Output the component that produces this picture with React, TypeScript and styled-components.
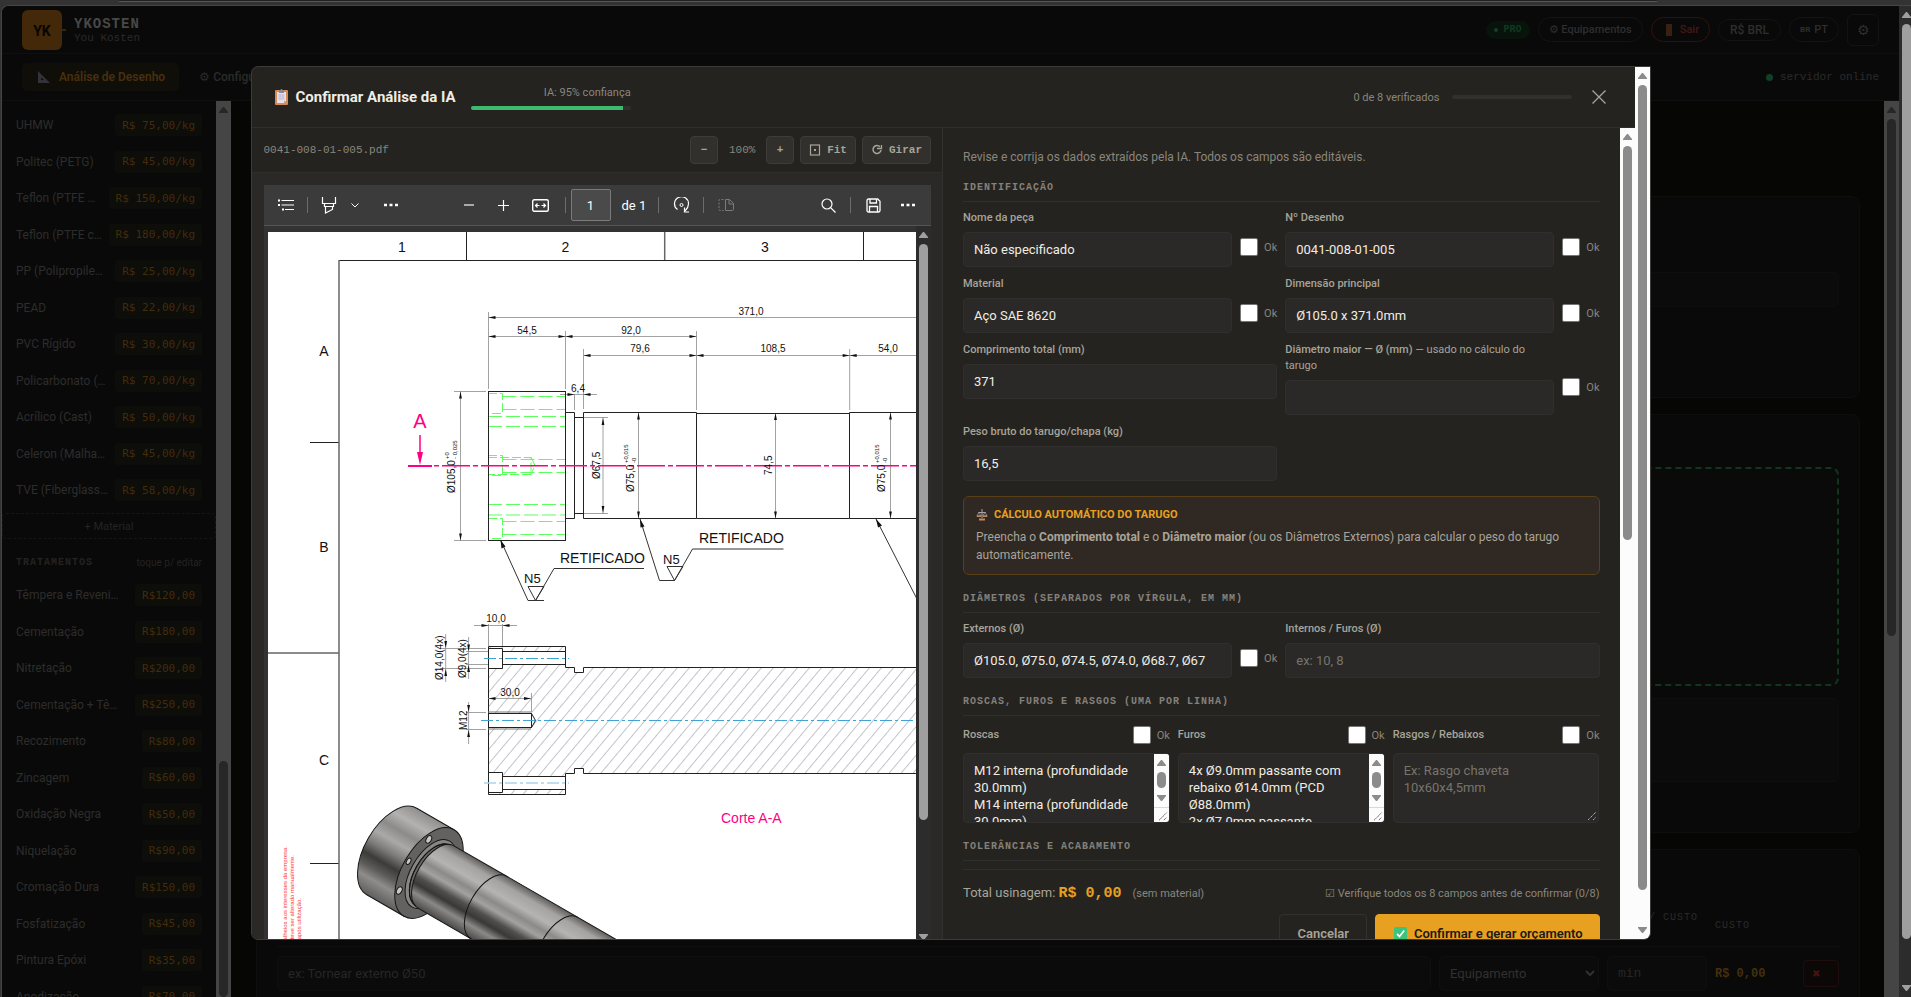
import React from 'react';
import styled, { createGlobalStyle, css } from 'styled-components';

const SANS = `Roboto, 'Liberation Sans', sans-serif`;
const MONO = `'Liberation Mono', 'DejaVu Sans Mono', monospace`;

const GlobalStyle = createGlobalStyle`
  *, *::before, *::after { box-sizing: border-box; }
  html, body { margin: 0; padding: 0; background: #060604; }
  body { font-family: ${SANS}; font-size: 13px; color: #a8a498; overflow: hidden; }
  button, input, select, textarea { font-family: inherit; margin: 0; }
`;

/* ---------- window shell ---------- */

const Shell = styled.div`
  height: 100vh;
  display: flex;
  flex-direction: column;
  background: #333333;
`;

const ChromeStrip = styled.div`
  flex: none;
  height: 5px;
  padding: 0 253px 0 118px;
`;

const ChromeTab = styled.div`
  height: 2px;
  background: #202020;
  border-bottom: 1px solid #585858;
  border-radius: 0 0 6px 6px;
`;

const WindowRow = styled.div`
  flex: 1;
  min-height: 0;
  display: flex;
  border: 1px solid #454545;
  border-right: 0;
  border-bottom: 0;
  border-radius: 8px 0 0 0;
  margin-left: 1px;
  overflow: hidden;
`;

const Page = styled.div`
  position: relative;
  flex: 1;
  min-width: 0;
  display: flex;
  flex-direction: column;
  background: #060604;
  overflow: hidden;
`;

/* ---------- scroll bars ---------- */

type Tone = 'light' | 'dim' | 'dark' | 'window';
const tones: Record<Tone, { track: string; thumb: string }> = {
  light: { track: '#fcfcfc', thumb: '#8b8b8b' },
  dim: { track: '#454545', thumb: '#272727' },
  dark: { track: '#2c2c2c', thumb: '#9f9f9f' },
  window: { track: '#2c2c2c', thumb: '#9f9f9f' },
};

const Track = styled.div<{ $tone: Tone; $narrow?: boolean }>`
  flex: none;
  width: ${p => (p.$narrow ? 12 : 15)}px;
  display: flex;
  flex-direction: column;
  padding-left: 3px;
  overflow: hidden;
  background: ${p => tones[p.$tone].track};
  color: ${p => tones[p.$tone].thumb};
`;

const ArrowSlot = styled.svg`
  flex: none;
  width: 9px;
  height: 18px;
  fill: currentColor;
`;

const Part = styled.div<{ $grow: number; $solid?: boolean }>`
  flex: ${p => p.$grow} 1 0;
  width: 9px;
  border-radius: 5px;
  background: ${p => (p.$solid ? 'currentColor' : 'transparent')};
`;

function ScrollBar({ tone, before = 0, thumb, after, narrow, openEnd }: {
  tone: Tone; before?: number; thumb: number; after: number; narrow?: boolean; openEnd?: boolean;
}) {
  return (
    <Track $tone={tone} $narrow={narrow} aria-hidden="true">
      <ArrowSlot viewBox="0 0 9 18"><path d="M4 6h1l4 5v1H0v-1z" /></ArrowSlot>
      <Part $grow={before} />
      <Part $grow={thumb} $solid />
      <Part $grow={after} />
      {!openEnd && <ArrowSlot viewBox="0 0 9 18"><path d="M4 12h1l4-5v-1H0v1z" /></ArrowSlot>}
    </Track>
  );
}

/* ---------- dimmed page behind the dialog ---------- */

const TopBar = styled.header`
  flex: none;
  height: 48px;
  display: flex;
  align-items: center;
  padding: 0 20px 0 20px;
  background: #090909;
  border-bottom: 1px solid #0f0f0f;
`;

const Logo = styled.div`
  width: 40px;
  height: 40px;
  border-radius: 6px;
  background: #43290a;
  color: #060604;
  display: flex;
  align-items: center;
  justify-content: center;
  padding-top: 3px;
  font-size: 14px;
  font-weight: 700;
`;

const LogoTick = styled.span`
  width: 4px;
  height: 2px;
  margin-right: 8px;
  background: #3a250c;
`;

const Brand = styled.div`
  flex: 1;
  font-family: ${MONO};
`;

const BrandName = styled.div`
  font-size: 14px;
  line-height: 16px;
  font-weight: 700;
  letter-spacing: 1px;
  color: #484846;
`;

const BrandSub = styled.div`
  font-size: 11px;
  line-height: 12px;
  color: #2a2a29;
`;

const TopActions = styled.div`
  display: flex;
  align-items: center;
  gap: 8px;
`;

const ProBadge = styled.span`
  display: flex;
  align-items: center;
  gap: 6px;
  height: 18px;
  padding: 0 8px;
  border-radius: 9px;
  background: #08130c;
  color: #103a22;
  font-family: ${MONO};
  font-size: 10px;
  font-weight: 700;
`;

const Dot = styled.i<{ $size: number }>`
  width: ${p => p.$size}px;
  height: ${p => p.$size}px;
  border-radius: 50%;
  background: #123f26;
`;

const Pill = styled.button<{ $danger?: boolean; $short?: boolean }>`
  display: flex;
  align-items: center;
  gap: 4px;
  height: ${p => (p.$short ? 22 : 25)}px;
  padding: 0 ${p => (p.$short ? 11 : 10)}px;
  border-radius: 13px;
  border: 1px solid ${p => (p.$danger ? '#33110f' : '#131312')};
  background: transparent;
  color: ${p => (p.$danger ? '#491612' : '#2e2e2d')};
  font-size: ${p => (p.$short ? 12 : 11)}px;
  font-weight: 500;
`;

const FlagCode = styled.span`
  font-size: 8px;
  font-weight: 700;
`;

const GearButton = styled.button`
  width: 32px;
  height: 32px;
  border-radius: 6px;
  border: 1px solid #131312;
  background: transparent;
  color: #2e2e2d;
  font-size: 14px;
  line-height: 16px;
  padding: 0;
`;

const NavBar = styled.nav`
  flex: none;
  height: 47px;
  display: flex;
  align-items: center;
  gap: 4px;
  padding: 0 20px;
  background: #090909;
  border-bottom: 1px solid #0f0f0f;
`;

const NavTab = styled.button<{ $active?: boolean }>`
  display: flex;
  align-items: center;
  gap: 9px;
  height: 28px;
  padding: 0 14px 0 16px;
  border: 0;
  border-radius: 5px;
  font-size: 12px;
  font-weight: ${p => (p.$active ? 600 : 500)};
  color: ${p => (p.$active ? '#48300e' : '#2b2b2a')};
  background: ${p => (p.$active ? '#100e08' : 'transparent')};
`;

const ServerStatus = styled.div`
  margin-left: auto;
  display: flex;
  align-items: center;
  gap: 7px;
  font-family: ${MONO};
  font-size: 11px;
  color: #2b2b2a;
`;

const Columns = styled.div`
  flex: 1;
  min-height: 0;
  display: flex;
`;

const Sidebar = styled.aside`
  flex: none;
  width: 214px;
  background: #090909;
  overflow: hidden;
  padding-top: 6px;
`;

const PriceRow = styled.label`
  display: flex;
  align-items: center;
  justify-content: space-between;
  height: 36px;
  padding: 0 14px;
  font-size: 12px;
  color: #2d2d2b;
  white-space: nowrap;
  &:nth-child(even) { height: 37px; }
`;

const PriceInput = styled.input<{ $chars: number }>`
  width: calc(${p => p.$chars}ch + 14px);
  height: 22px;
  padding: 0 7px;
  border: 0;
  border-radius: 3px;
  background: #0d0d0a;
  color: #432c0b;
  font-family: 'DejaVu Sans Mono', ${MONO};
  font-size: 11px;
`;

const PriceList = styled.div``;

const AddMaterial = styled.button`
  display: block;
  width: 100%;
  height: 26px;
  margin: 5px 0 10px;
  border: 1px dashed #161615;
  border-radius: 4px;
  background: transparent;
  color: #242423;
  font-size: 11px;
`;

const ListHead = styled.div`
  display: flex;
  align-items: center;
  justify-content: space-between;
  height: 26px;
  padding: 0 14px;
  margin-bottom: 2px;
  color: #232322;
  font-size: 10px;
`;

const ListTitle = styled.span`
  font-family: ${MONO};
  font-size: 10px;
  font-weight: 700;
  letter-spacing: 1px;
`;

const Main = styled.main`
  flex: 1;
  min-width: 0;
  padding: 95px 24px 0 25px;
  display: flex;
  flex-direction: column;
  gap: 16px;
  overflow: hidden;
`;

const Card = styled.section`
  flex: none;
  border: 1px solid #0e0e0d;
  border-radius: 8px;
  background: #090909;
  padding: 54px 20px 50px;
`;

const ImportCard = styled(Card)`
  padding-top: 52px;
`;

const CardField = styled.div<{ $tall?: boolean }>`
  margin-top: ${p => (p.$tall ? 12 : 21)}px;
  height: ${p => (p.$tall ? 84 : 35)}px;
  margin-bottom: ${p => (p.$tall ? 0 : 40)}px;
  border: 1px solid #0e0e0d;
  border-radius: 5px;
  background: #0b0b0b;
`;

const DropZone = styled.div`
  height: 219px;
  border: 2px dashed #12351f;
  border-radius: 8px;
  background: #0a0a0a;
`;

const costGrid = css`
  display: grid;
  grid-template-columns: 1fr 160px 100px 80px 36px;
  gap: 8px;
  align-items: center;
`;

const CostCard = styled(Card)`
  padding-top: 60px;
`;

const CostHead = styled.div`
  ${costGrid}
  height: 37px;
  border-bottom: 1px solid #0f0f0e;
  padding-bottom: 4px;
  font-family: ${MONO};
  font-size: 10px;
  line-height: 16px;
  letter-spacing: 1px;
  color: #2b2b29;
  white-space: nowrap;
`;

const CostRow = styled.div`
  ${costGrid}
  padding-top: 9px;
`;

const dimBox = css`
  width: 100%;
  height: 35px;
  border: 1px solid #0f0f0e;
  border-radius: 5px;
  background: #0b0b0b;
  color: #31312f;
  font-size: 13px;
  padding: 0 10px;
  &::placeholder { color: #262625; opacity: 1; }
`;

const DimInput = styled.input<{ $mono?: boolean }>`
  ${dimBox}
  ${p => p.$mono && css`font-family: ${MONO};`}
`;

const DimSelect = styled.select`
  ${dimBox}
  padding: 0 6px;
`;

const CostValue = styled.output`
  font-family: ${MONO};
  font-size: 12px;
  font-weight: 700;
  color: #43300f;
`;

const RemoveButton = styled.button`
  height: 27px;
  border: 1px solid #1f0d0c;
  border-radius: 4px;
  background: #0d0808;
  color: #42150f;
  font-size: 10px;
  padding: 0 10px 0 0;
`;

/* ---------- dialog ---------- */

const Overlay = styled.div`
  position: absolute;
  inset: 0;
  display: flex;
  justify-content: center;
  padding: 60px 20px 57px;
`;

const Dialog = styled.div`
  width: 100%;
  max-width: 1400px;
  height: 100%;
  display: flex;
  align-items: stretch;
  overflow: hidden;
  border: 1px solid #3b3b39;
  border-radius: 7px 0 7px 7px;
  background: #242320;
`;

const DialogContent = styled.div`
  flex: 1;
  min-width: 0;
  display: flex;
  flex-direction: column;
`;

const DialogHeader = styled.header`
  flex: none;
  height: 61px;
  display: flex;
  align-items: center;
  padding: 0 26px 0 23px;
  border-bottom: 1px solid #2f2e2c;
`;

const DialogTitle = styled.h2`
  margin: 0 15px 0 0;
  display: flex;
  align-items: center;
  gap: 8px;
  font-size: 15px;
  line-height: 20px;
  font-weight: 700;
  color: #f0ede4;
`;

const Confidence = styled.div`
  width: 160px;
  margin-right: auto;
  text-align: right;
  font-size: 11px;
  line-height: 16px;
  color: #8a867c;
`;

const Meter = styled.div<{ $fill: number; $wide?: boolean }>`
  height: 4px;
  width: ${p => (p.$wide ? '100%' : '120px')};
  margin-top: ${p => (p.$wide ? 5 : 0)}px;
  border-radius: 2px;
  overflow: hidden;
  background: #31302e;
  &::before {
    content: '';
    display: block;
    height: 100%;
    width: ${p => p.$fill}%;
    background: #3dba6f;
  }
`;

const Verified = styled.div`
  display: flex;
  align-items: center;
  gap: 12px;
  font-size: 11px;
  color: #8a867c;
`;

const CloseButton = styled.button`
  margin-left: 17px;
  width: 20px;
  height: 20px;
  padding: 0;
  border: 0;
  background: transparent;
  color: #a8a498;
`;

const DialogBody = styled.div`
  flex: none;
  display: grid;
  grid-template-columns: minmax(0, 1fr) minmax(0, 1fr);
`;

/* ---------- document pane ---------- */

const DocPane = styled.div`
  display: flex;
  flex-direction: column;
  border-right: 1px solid #32312f;
  background: #2a2927;
`;

const DocBar = styled.div`
  flex: none;
  height: 45px;
  display: flex;
  align-items: center;
  gap: 6px;
  padding: 0 11px 0 12px;
  background: #242320;
  border-bottom: 1px solid #2f2e2c;
  font-family: ${MONO};
  font-size: 11px;
  color: #8a867c;
`;

const FileName = styled.span`
  margin-right: auto;
`;

const Zoom = styled.span`
  width: 36px;
  text-align: center;
`;

const ToolButton = styled.button`
  height: 28px;
  min-width: 28px;
  display: flex;
  align-items: center;
  justify-content: center;
  gap: 6px;
  padding: 0 8px;
  border: 1px solid #3d3c39;
  border-radius: 4px;
  background: #31302d;
  color: #a8a498;
  font-family: ${MONO};
  font-size: 11px;
  font-weight: 700;
`;

const Viewer = styled.div`
  flex: 1;
  display: flex;
  flex-direction: column;
  margin: 12px 11px 27px 12px;
  background: #333333;
`;

const ViewerBar = styled.div`
  flex: none;
  height: 41px;
  display: flex;
  align-items: center;
  padding: 0 6px 0 8px;
  background: #3b3b3b;
  border-bottom: 1px solid #555555;
  color: #ffffff;
  font-size: 13px;
`;

const ViewerGroup = styled.div<{ $place?: 'middle' | 'end' }>`
  display: flex;
  align-items: center;
  ${p => p.$place === 'middle' && css`margin-left: 37px;`}
  ${p => p.$place === 'end' && css`margin-left: auto;`}
`;

const IconButton = styled.button<{ $w?: number; $dim?: boolean }>`
  width: ${p => p.$w ?? 36}px;
  height: 32px;
  padding: 0;
  display: flex;
  align-items: center;
  justify-content: center;
  border: 0;
  background: transparent;
  color: ${p => (p.$dim ? '#7b7b7b' : '#ffffff')};
`;

const Glyph = styled.svg`
  display: block;
  fill: none;
  stroke: currentColor;
`;

const Divider = styled.i<{ $gap?: number }>`
  width: 1px;
  height: 16px;
  margin: 0 ${p => p.$gap ?? 4}px;
  background: #6c6c6c;
`;

const PageInput = styled.input`
  width: 40px;
  height: 32px;
  border: 1px solid #7a7a7a;
  border-radius: 2px;
  background: #4a4a4a;
  color: #ffffff;
  font-size: 13px;
  text-align: center;
  padding: 0;
`;

const PageCount = styled.span`
  margin: 0 8px 0 11px;
`;

const ViewerStage = styled.div`
  flex: 1;
  min-height: 0;
  display: flex;
`;

const Sheet = styled.div`
  flex: 1;
  min-width: 0;
  margin: 6px 0 0 4px;
  background: #ffffff;
  overflow: hidden;
`;

const Drawing = styled.svg`
  display: block;
  width: 648px;
  height: 708px;
`;

/* ---------- form pane ---------- */

const FormPane = styled.div`
  display: flex;
`;

const Form = styled.form`
  flex: 1;
  min-width: 0;
  padding: 20px;
`;

const Intro = styled.p`
  margin: 0 0 14px;
  font-size: 12px;
  line-height: 18px;
  color: #8a867c;
`;

const SectionTitle = styled.h3<{ $first?: boolean }>`
  margin: ${p => (p.$first ? 0 : 16)}px 0 8px;
  padding-bottom: 5px;
  border-bottom: 1px solid #302f2d;
  font-family: ${MONO};
  font-size: 10px;
  line-height: 16px;
  font-weight: 700;
  letter-spacing: 1px;
  text-transform: uppercase;
  color: #85817a;
`;

const FieldGrid = styled.div<{ $cols: number }>`
  display: grid;
  grid-template-columns: repeat(${p => p.$cols}, minmax(0, 1fr));
  gap: 9px 8px;
`;

const FieldRow = styled.div`
  display: flex;
  align-items: center;
  align-self: start;
  gap: 8px;
`;

const FieldStack = styled.div`
  flex: 1;
  min-width: 0;
`;

const FieldLabel = styled.label`
  display: block;
  margin-bottom: 6px;
  font-size: 11px;
  line-height: 16px;
  font-weight: 500;
  color: #a8a498;
`;

const LabelNote = styled.span`
  font-weight: 400;
`;

const controlBox = css`
  display: block;
  width: 100%;
  border: 1px solid #302f2d;
  border-radius: 4px;
  background: #2a2927;
  color: #f0ede4;
  font-size: 13px;
  &::placeholder { color: #77746c; opacity: 1; }
`;

const TextInput = styled.input`
  ${controlBox}
  height: 35px;
  padding: 0 10px;
`;

const OkLabel = styled.label<{ $beside?: boolean }>`
  flex: none;
  display: flex;
  align-items: center;
  gap: 6px;
  padding-top: ${p => (p.$beside ? 17 : 0)}px;
  font-size: 11px;
  color: #8a867c;
`;

const Tick = styled.input`
  appearance: none;
  width: 18px;
  height: 18px;
  border: 1px solid #767676;
  border-radius: 2px;
  background: #ffffff;
`;

const Callout = styled.aside`
  margin-top: 15px;
  padding: 10px 12px;
  border: 1px solid #5a4019;
  border-radius: 6px;
  background: #302822;
  font-size: 12px;
  line-height: 18px;
  color: #a8a498;
`;

const CalloutTitle = styled.div`
  display: flex;
  align-items: center;
  gap: 6px;
  margin-bottom: 5px;
  font-size: 11px;
  line-height: 16px;
  font-weight: 700;
  text-transform: uppercase;
  color: #e8a020;
`;

const NoteHead = styled.div`
  display: flex;
  align-items: center;
  justify-content: space-between;
  height: 22px;
  margin-bottom: 7px;
  > label:first-child { margin: 0; }
`;

const NoteBox = styled.div`
  ${controlBox}
  display: flex;
  height: 70px;
  overflow: hidden;
`;

const NoteArea = styled.textarea`
  flex: 1;
  min-width: 0;
  border: 0;
  resize: none;
  overflow: hidden;
  background: transparent;
  color: inherit;
  font-size: 13px;
  line-height: 17px;
  padding: 8px 10px 0;
  &::placeholder { color: #77746c; opacity: 1; }
`;

const NoteSide = styled.div<{ $scroll?: boolean }>`
  flex: none;
  width: 15px;
  display: flex;
  flex-direction: column;
  justify-content: flex-end;
  background: ${p => (p.$scroll ? '#fcfcfc' : 'transparent')};
  color: ${p => (p.$scroll ? '#444444' : '#b0b0b0')};
  > div { flex: 1; }
`;

const Grip = styled.svg<{ $line?: boolean }>`
  display: block;
  width: 15px;
  height: 15px;
  fill: none;
  stroke: currentColor;
  ${p => p.$line && css`border-top: 1px solid #d9d9d9;`}
`;

const FormFooter = styled.footer`
  border-top: 1px solid #302f2d;
  padding-top: 13px;
`;

const TotalRow = styled.div`
  display: flex;
  align-items: center;
  justify-content: space-between;
  height: 20px;
  margin-bottom: 11px;
  font-size: 13px;
`;

const TotalValue = styled.strong`
  font-family: ${MONO};
  font-size: 15px;
  color: #e8a020;
  white-space: pre;
`;

const Hint = styled.span<{ $apart?: boolean }>`
  margin-left: ${p => (p.$apart ? 11 : 0)}px;
  font-size: 11px;
  color: #8a867c;
`;

const ActionRow = styled.div`
  display: flex;
  justify-content: flex-end;
  gap: 8px;
`;

const ActionButton = styled.button<{ $primary?: boolean }>`
  height: 39px;
  display: flex;
  align-items: center;
  gap: 7px;
  padding: 0 17px;
  border: 1px solid ${p => (p.$primary ? '#e8a020' : '#32312f')};
  border-radius: 4px;
  background: ${p => (p.$primary ? '#e8a020' : 'transparent')};
  color: ${p => (p.$primary ? '#1c1a16' : '#a8a498')};
  font-size: 13px;
  font-weight: 600;
  ${p => p.$primary && css`padding: 0 16px 0 18px;`}
`;

/* ---------- data ---------- */

const materials: [string, string][] = [
  ['UHMW', 'R$ 75,00/kg'],
  ['Politec (PETG)', 'R$ 45,00/kg'],
  ['Teflon (PTFE …', 'R$ 150,00/kg'],
  ['Teflon (PTFE c…', 'R$ 180,00/kg'],
  ['PP (Polipropile…', 'R$ 25,00/kg'],
  ['PEAD', 'R$ 22,00/kg'],
  ['PVC Rígido', 'R$ 30,00/kg'],
  ['Policarbonato (…', 'R$ 70,00/kg'],
  ['Acrílico (Cast)', 'R$ 50,00/kg'],
  ['Celeron (Malha…', 'R$ 45,00/kg'],
  ['TVE (Fiberglass…', 'R$ 58,00/kg'],
];

const treatments: [string, string][] = [
  ['Têmpera e Reveni…', 'R$120,00'],
  ['Cementação', 'R$180,00'],
  ['Nitretação', 'R$200,00'],
  ['Cementação + Tê…', 'R$250,00'],
  ['Recozimento', 'R$80,00'],
  ['Zincagem', 'R$60,00'],
  ['Oxidação Negra', 'R$50,00'],
  ['Niquelação', 'R$90,00'],
  ['Cromação Dura', 'R$150,00'],
  ['Fosfatização', 'R$45,00'],
  ['Pintura Epóxi', 'R$35,00'],
  ['Anodização', 'R$70,00'],
];

/* ---------- small parts ---------- */

function Prices({ items }: { items: [string, string][] }) {
  return (
    <PriceList>
      {items.map(([name, price]) => (
        <PriceRow key={name}>
          {name}
          <PriceInput $chars={price.length} defaultValue={price} />
        </PriceRow>
      ))}
    </PriceList>
  );
}

function Ok({ name, beside }: { name: string; beside?: boolean }) {
  return (
    <OkLabel $beside={beside}>
      <Tick type="checkbox" name={`ok-${name}`} />
      Ok
    </OkLabel>
  );
}

function Field({ id, label, note, value, placeholder, ok }: {
  id: string; label: string; note?: string; value?: string; placeholder?: string; ok?: boolean;
}) {
  return (
    <FieldRow>
      <FieldStack>
        <FieldLabel htmlFor={id}>
          {label}
          {note && <LabelNote> {note}</LabelNote>}
        </FieldLabel>
        <TextInput id={id} defaultValue={value} placeholder={placeholder} />
      </FieldStack>
      {ok && <Ok name={id} beside />}
    </FieldRow>
  );
}

function Note({ id, label, value, placeholder, scroll }: {
  id: string; label: string; value?: string; placeholder?: string; scroll?: boolean;
}) {
  return (
    <FieldStack>
      <NoteHead>
        <FieldLabel htmlFor={id}>{label}</FieldLabel>
        <Ok name={id} />
      </NoteHead>
      <NoteBox>
        <NoteArea id={id} defaultValue={value} placeholder={placeholder} />
        <NoteSide $scroll={scroll}>
          {scroll && <ScrollBar tone="light" thumb={17} after={1} />}
          <Grip viewBox="0 0 15 15" $line={scroll}><path d="M5 13 13 5M10 13l3-3" strokeDasharray="1.5 .6" /></Grip>
        </NoteSide>
      </NoteBox>
    </FieldStack>
  );
}

const ClipboardIcon = () => (
  <svg width="13" height="16" viewBox="0 0 13 16">
    <rect x="0" y="1" width="13" height="15" rx="1" fill="#d78a52" />
    <path d="M2 3h9v9l-2 2H2z" fill="#e6dff0" />
    <path d="M11 12H9v2z" fill="#a99bb8" />
    <path d="M3.500 6h6M3.500 8h6M3.500 10h6" stroke="#b9b0c9" strokeWidth="1" />
    <path d="M4 1h1.500a1 1 0 0 1 2 0H9v3H4z" fill="#8c8794" />
  </svg>
);

const CheckIcon = () => (
  <svg width="13" height="13" viewBox="0 0 13 13">
    <rect width="13" height="13" rx="1.500" fill="#3cc47c" />
    <path d="M3 6.800 5.500 9.500 10.200 3.500" fill="none" stroke="#fff" strokeWidth="1.700" />
  </svg>
);

const ScaleIcon = () => (
  <svg width="12" height="12" viewBox="0 0 12 12" fill="none" stroke="#c08a5c">
    <path d="M6 0v9M2.500 3.500h7" stroke="#a9a4ad" />
    <path d="M3 3 1 7h4zM9 3 7 7h4z" stroke="#a9a4ad" strokeWidth=".7" />
    <path d="M.8 7.200h4.400M6.800 7.200h4.400" strokeWidth="1.400" />
    <path d="M3 10.500h6" strokeWidth="2" />
  </svg>
);

const SetSquareIcon = () => (
  <svg width="12" height="12" viewBox="0 0 12 12"><path fillRule="evenodd" d="M0 0l12 12H0zM3 6.500V9h3z" fill="#343238" /></svg>
);

/* ---------- technical drawing ---------- */

const arrowAt = (x: number, y: number, dir: 'l' | 'r' | 'u' | 'd') => {
  const a = 7, b = 1.4;
  if (dir === 'l') return `M${x} ${y}l${a} ${-b}v${2 * b}z`;
  if (dir === 'r') return `M${x} ${y}l${-a} ${-b}v${2 * b}z`;
  if (dir === 'u') return `M${x} ${y}l${-b} ${a}h${2 * b}z`;
  return `M${x} ${y}l${-b} ${-a}h${2 * b}z`;
};

function Up({ x, y, size = 10, anchor = 'start', fill = '#111', children }: {
  x: number; y: number; size?: number; anchor?: 'start' | 'middle' | 'end'; fill?: string; children: React.ReactNode;
}) {
  return (
    <text transform={`translate(${x} ${y}) rotate(-90)`} fontSize={size} textAnchor={anchor} fill={fill}>{children}</text>
  );
}

function TechnicalDrawing() {
  return (
    <Drawing viewBox="268 232 648 708" fontFamily="'Liberation Sans', Arial, sans-serif" role="img" aria-label="0041-008-01-005">
      <defs>
        <pattern id="hatch" width="9.200" height="9.200" patternUnits="userSpaceOnUse" patternTransform="rotate(40)">
          <path d="M.5 0V9.200" stroke="#b4b5be" strokeWidth=".8" />
        </pattern>
        <linearGradient id="flange" x1="0" y1="0" x2="0" y2="1">
          <stop offset="0" stopColor="#8f8e8c" /><stop offset=".15" stopColor="#b3b2b0" />
          <stop offset=".28" stopColor="#8c8b89" /><stop offset=".4" stopColor="#aaa9a7" />
          <stop offset=".52" stopColor="#7c7b79" /><stop offset=".64" stopColor="#3b3b39" />
          <stop offset=".74" stopColor="#5c5b59" /><stop offset=".84" stopColor="#8e8d8b" />
          <stop offset="1" stopColor="#5f5e5c" />
        </linearGradient>
        <linearGradient id="shaft" x1="0" y1="-36" x2="0" y2="36" gradientUnits="userSpaceOnUse">
          <stop offset="0" stopColor="#5f5e5c" /><stop offset=".12" stopColor="#a4a3a1" />
          <stop offset=".28" stopColor="#b5b4b2" /><stop offset=".4" stopColor="#8b8a88" />
          <stop offset=".5" stopColor="#a3a2a0" /><stop offset=".62" stopColor="#504f4d" />
          <stop offset=".72" stopColor="#383836" /><stop offset=".84" stopColor="#8a8987" />
          <stop offset="1" stopColor="#4a4947" />
        </linearGradient>
      </defs>

      {/* sheet frame */}
      <g fill="none" stroke="#222">
        <path d="M339 260.500H916M466.500 232v28M863.500 232v28M310 442.500h29M310 863.500h29" />
        <path d="M664.700 232v28M268 653h71M339 260v680" stroke="#666" strokeWidth="1.500" />
      </g>
      <g fontSize="14" textAnchor="middle" fill="#111">
        <text x="402" y="252">1</text><text x="565.500" y="252">2</text><text x="765" y="252">3</text>
        <text x="324" y="356">A</text><text x="324" y="552">B</text><text x="324" y="765">C</text>
      </g>

      {/* dimension lines, front view */}
      <g fill="none" stroke="#8a8a8a" strokeWidth=".8">
        <path d="M488.500 317.500H916M488.500 312v77M488.500 336.500H696.500M565.500 331v58M696.500 331v79" />
        <path d="M583.500 355.500H916M583.500 349v60M849.700 349v61" />
        <path d="M560 394.500h37M574.500 394v16" />
        <path d="M454 391.500h32M454 540.500h32M460.500 391v150M583 417.500h25M583 513.500h25M603 417v97" />
        <path d="M638.500 412v107M775.500 413v106M890.500 412v107" />
      </g>
      <g fill="#111">
        {[
          arrowAt(488.5, 317.5, 'l'), arrowAt(488.5, 336.5, 'l'), arrowAt(565.5, 336.5, 'r'), arrowAt(565.5, 336.5, 'l'),
          arrowAt(696.5, 336.5, 'r'), arrowAt(583.5, 355.5, 'l'), arrowAt(696.5, 355.5, 'r'), arrowAt(696.5, 355.5, 'l'),
          arrowAt(849.7, 355.5, 'r'), arrowAt(849.7, 355.5, 'l'), arrowAt(574.5, 394.5, 'r'), arrowAt(583.5, 394.5, 'l'),
          arrowAt(460.5, 391.5, 'u'), arrowAt(460.5, 540.5, 'd'), arrowAt(603, 418, 'u'), arrowAt(603, 513, 'd'),
          arrowAt(638.5, 412.5, 'u'), arrowAt(638.5, 518.5, 'd'), arrowAt(775.5, 413, 'u'), arrowAt(775.5, 518.5, 'd'),
          arrowAt(890.5, 412.5, 'u'), arrowAt(890.5, 518.5, 'd'),
        ].map((d, i) => <path key={i} d={d} />)}
      </g>
      <g fontSize="10" textAnchor="middle" fill="#111">
        <text x="751" y="315">371,0</text><text x="527" y="334">54,5</text><text x="631" y="334">92,0</text>
        <text x="640" y="352">79,6</text><text x="773" y="352">108,5</text><text x="888" y="352">54,0</text>
        <text x="578" y="392">6,4</text>
      </g>

      {/* hidden edges */}
      <g fill="none" stroke="#5dff5d" strokeDasharray="14 4">
        <path d="M502.500 396.500h63M502.500 409.500h63M488 416.500h77M488 426.500h77M502.500 459.500h63M502.500 472.500h63M488 504.500h77M488 515h77M502.500 521.500h63M502.500 534.500h63" />
        <path d="M488 393.500h14.500v20H488M488 455.500h14.500v20H488M488 518.500h14.500v20H488" strokeDasharray="9 3" />
        <path d="M488 457.500h43v17H488M531 457l4 8.500-4 8.500" strokeDasharray="9 3" />
      </g>

      {/* shaft outline */}
      <g fill="none" stroke="#222">
        <rect x="488.500" y="391.500" width="77" height="149" />
        <path d="M565.500 412.500h9v106h-9M574.500 417.500h9M574.500 513.500h9M696.500 412.500h-113v106h113zM696.500 413.500H849.500M696.500 518.500H849.500M916 412.500h-66.500v106H916" />
      </g>

      {/* section plane */}
      <g stroke="#ff0084" fill="#ff0084">
        <path d="M408 466h24" strokeWidth="2" />
        <path d="M434 465.700H916" fill="none" strokeWidth="1.500" strokeDasharray="5 3 28 3" />
        <path d="M420 435v18" strokeWidth="1.500" />
        <path d="M420 465l-3-13h6z" stroke="none" />
      </g>
      <text x="420" y="428" fontSize="20" textAnchor="middle" fill="#ff0084">A</text>

      <Up x={455} y={493}>Ø105,0</Up><Up x={449} y={459} size={6}>+0</Up><Up x={457} y={459} size={6}>- 0,025</Up>
      <Up x={600} y={479}>Ø67,5</Up>
      <Up x={634} y={492}>Ø75,0</Up><Up x={628} y={463} size={6}>+0,015</Up><Up x={636} y={463} size={6}>-0</Up>
      <Up x={772} y={475}>74,5</Up>
      <Up x={885} y={492}>Ø75,0</Up><Up x={879} y={463} size={6}>+0,015</Up><Up x={887} y={463} size={6}>-0</Up>

      {/* finish marks */}
      <g fill="none" stroke="#333">
        <path d="M501 541l27 59.500h16M528 586.500h16l-8.500 14zM535.500 600.500l18.500-32h90" />
        <path d="M640 519l19.500 61.500h15M667 566.500h16l-8.500 14zM674.500 580.500l18-31.500h91" />
        <path d="M876 519l41 80" />
      </g>
      <g fill="#111">
        <path d="M500.500 540l1 8.500 4-2zM640 519l.5 8.500 4-1zM876 519l2 8.500 4-2z" />
      </g>
      <g fontSize="14" fill="#111">
        <text x="560" y="563">RETIFICADO</text><text x="699" y="543">RETIFICADO</text>
      </g>
      <g fontSize="13" fill="#111"><text x="524" y="583">N5</text><text x="663" y="564">N5</text></g>

      {/* section view */}
      <path d="M488.500 646.500h77v21h9v5h9v-5H916v106H583.500v-5h-9v5h-9v21h-77z" fill="url(#hatch)" />
      <g fill="#fff" stroke="#222">
        <path d="M502.500 651.500h63v13h-63zM488.500 648.500h14v20h-14zM502.500 776.500h63v13h-63zM488.500 772.500h14v20h-14zM488.500 713.500h43v14h-43zM531.500 713.500l4 7-4 7z" />
      </g>
      <g fill="none" stroke="#222">
        <path d="M488.500 646.500h77v21h9v5h9v-5H916M488.500 646.500v148M916 773.500H583.500v-5h-9v5h-9v21h-77" />
        <path d="M488 712h43M488 729h43" stroke="#777" />
      </g>
      <g fill="none" stroke="#3fa4d4" strokeDasharray="12 3 3 3">
        <path d="M484 658.500h85M481 720.500H916" />
        <path d="M484 783h85" stroke="#a6d6ea" strokeWidth="1.500" />
      </g>
      <g fill="none" stroke="#8a8a8a" strokeWidth=".8">
        <path d="M474 625.500h43M488.500 624v22M502.500 624v22M488 698.500h43M531.500 693v19" />
        <path d="M445.700 634v48M468.600 637v42M440 648.500h46M440 668.500h46M466 651.500h22M466 664.500h22M468.600 702v42M466 712.500h20M466 729.500h20" />
      </g>
      <g fill="#111">
        {[
          arrowAt(488.5, 625.5, 'r'), arrowAt(502.5, 625.5, 'l'), arrowAt(488.5, 698.5, 'l'), arrowAt(531, 698.5, 'r'),
          arrowAt(445.7, 648, 'd'), arrowAt(445.7, 669, 'u'), arrowAt(468.6, 651.5, 'd'), arrowAt(468.6, 665, 'u'),
          arrowAt(468.6, 712, 'd'), arrowAt(468.6, 730, 'u'),
        ].map((d, i) => <path key={i} d={d} />)}
      </g>
      <g fontSize="10" textAnchor="middle" fill="#111">
        <text x="496" y="622">10,0</text><text x="510" y="696">30,0</text>
      </g>
      <Up x={443} y={680}>Ø14,0(4x)</Up><Up x={466} y={678}>Ø9,0(4x)</Up><Up x={467} y={730}>M12</Up>
      <text x="721" y="823" fontSize="14" fill="#ff0084">Corte A-A</text>

      {/* shaded view */}
      <g transform="translate(429 873) rotate(30)" stroke="#151515">
        <path d="M-43-50A27 50 0 0 0-43 50L0 50V-50z" fill="url(#flange)" />
        <ellipse rx="27" ry="50" fill="#636261" />
        <ellipse cx="2" rx="20" ry="38" fill="#878685" />
        <ellipse cx="4" rx="18" ry="34" fill="#6a6968" />
        <path d="M8-36A19 36 0 0 0 8 36L260 36V-36z" fill="url(#shaft)" />
        <path d="M5-35A19 35 0 0 0 5 35" fill="none" />
        <path d="M69-36A19 36 0 0 0 69 36M151-36A19 36 0 0 0 151 36" fill="none" />
        <g fill="#c9c8c6">
          <ellipse cx="-17" cy="-29" rx="2.500" ry="4" /><ellipse cx="-23.500" cy="0" rx="2" ry="3.500" /><ellipse cx="-17" cy="30" rx="2.500" ry="4" />
        </g>
      </g>

      <Up x={287} y={846} size={6} anchor="end" fill="#f33">alheios aos interesses da empresa.</Up>
      <Up x={294} y={855} size={6} anchor="end" fill="#f33">deve ser alterado manualmente.</Up>
      <Up x={301} y={898} size={6} anchor="end" fill="#f33">após utilização.</Up>
    </Drawing>
  );
}

function DocumentViewer() {
  return (
    <Viewer>
      <ViewerBar>
        <ViewerGroup>
          <IconButton $w={28} aria-label="Sumário">
            <Glyph width="16" height="12" viewBox="0 0 16 12"><path d="M3.500 1.500H16M3.500 6H16M7 10.500h9" strokeWidth="1.200" /><path d="M0 1.500h2M0 6h2M4 10.500h2" strokeWidth="2" /></Glyph>
          </IconButton>
          <Divider $gap={7} />
          <IconButton $w={28} aria-label="Realçar">
            <Glyph width="16" height="17" viewBox="0 0 16 17"><path d="M1.500 0v6.500h13V0M3.500 6.500v3h9v-3M4.500 9.500v6.500l7-3.500v-3" strokeWidth="1.200" /></Glyph>
          </IconButton>
          <IconButton $w={24} aria-label="Opções de realce">
            <Glyph width="8" height="5" viewBox="0 0 8 5"><path d="M.5.5 4 4 7.500.5" /></Glyph>
          </IconButton>
          <IconButton $w={48} aria-label="Mais ferramentas">
            <Glyph width="14" height="4" viewBox="0 0 14 4"><path d="M0 2h3M5.500 2h3M11 2h3" strokeWidth="2.400" /></Glyph>
          </IconButton>
        </ViewerGroup>
        <ViewerGroup $place="middle">
          <IconButton $w={34} aria-label="Reduzir">
            <Glyph width="10" height="2" viewBox="0 0 10 2"><path d="M0 1h10" stroke="#a9a9a9" strokeWidth="2" /></Glyph>
          </IconButton>
          <IconButton aria-label="Ampliar">
            <Glyph width="11" height="11" viewBox="0 0 11 11"><path d="M0 5.500h11M5.500 0v11" strokeWidth="1.200" /></Glyph>
          </IconButton>
          <IconButton $w={38} aria-label="Ajustar à largura">
            <Glyph width="17" height="13" viewBox="0 0 17 13"><rect x=".7" y=".7" width="15.600" height="11.600" rx="1.500" strokeWidth="1.400" /><path d="M3.500 6.500h4M13.500 6.500h-4M5.500 4.500l-2 2 2 2M11.500 4.500l2 2-2 2" strokeWidth="1.200" /></Glyph>
          </IconButton>
          <Divider $gap={5} />
          <PageInput defaultValue="1" aria-label="Página" />
          <PageCount>de 1</PageCount>
          <Divider />
          <IconButton aria-label="Girar página">
            <Glyph width="17" height="16" viewBox="0 0 17 16"><path d="M4.500 12.500A7 7 0 1 1 15.500 7c0 3-1.500 5-3.500 7" strokeWidth="1.200" /><path d="M11.500 10.500V15h4.500" strokeWidth="1.200" /><circle cx="8.500" cy="8" r="1.500" /></Glyph>
          </IconButton>
          <Divider />
          <IconButton $dim aria-label="Exibição de página">
            <Glyph width="16" height="14" viewBox="0 0 16 14"><path d="M7.500 1.500h4l4 4v6a1 1 0 0 1-1 1h-7zM11 1.500V6h4.500" /><path d="M5.500 1.500H2a1 1 0 0 0-1 1v9a1 1 0 0 0 1 1h3.500" strokeDasharray="2 1.500" /></Glyph>
          </IconButton>
        </ViewerGroup>
        <ViewerGroup $place="end">
          <IconButton aria-label="Localizar">
            <Glyph width="15" height="15" viewBox="0 0 15 15"><circle cx="6" cy="6" r="5" strokeWidth="1.200" /><path d="M9.600 9.600 14.500 14.500" strokeWidth="1.200" /></Glyph>
          </IconButton>
          <Divider />
          <IconButton aria-label="Salvar">
            <Glyph width="15" height="15" viewBox="0 0 15 15"><path d="M2.500 1h9.200L14 3.300v9.200A1.500 1.500 0 0 1 12.500 14h-10A1.500 1.500 0 0 1 1 12.500v-10A1.500 1.500 0 0 1 2.500 1zM4 1v4h6.500V1M3.500 14V8.500h8V14" strokeWidth="1.300" /></Glyph>
          </IconButton>
          <IconButton $w={34} aria-label="Configurações">
            <Glyph width="14" height="4" viewBox="0 0 14 4"><path d="M0 2h3M5.500 2h3M11 2h3" strokeWidth="2.400" /></Glyph>
          </IconButton>
        </ViewerGroup>
      </ViewerBar>
      <ViewerStage>
        <Sheet><TechnicalDrawing /></Sheet>
        <ScrollBar tone="dark" thumb={576} after={108} />
      </ViewerStage>
    </Viewer>
  );
}

/* ---------- sections ---------- */

function Background() {
  return (
    <>
      <TopBar>
        <Logo>YK</Logo>
        <LogoTick />
        <Brand>
          <BrandName>YKOSTEN</BrandName>
          <BrandSub>You Kosten</BrandSub>
        </Brand>
        <TopActions>
          <ProBadge><Dot $size={4} />PRO</ProBadge>
          <Pill>⚙ Equipamentos</Pill>
          <Pill $danger>
            <svg width="14" height="12" viewBox="0 0 14 12"><path d="M4 0h6v12H4z" fill="#3a2013" /></svg>
            Sair
          </Pill>
          <Pill $short>R$ BRL</Pill>
          <Pill><FlagCode>BR</FlagCode>PT</Pill>
          <GearButton aria-label="Ajustes">⚙</GearButton>
        </TopActions>
      </TopBar>
      <NavBar>
        <NavTab $active><SetSquareIcon />Análise de Desenho</NavTab>
        <NavTab>⚙ Configurações</NavTab>
        <ServerStatus><Dot $size={7} />servidor online</ServerStatus>
      </NavBar>
      <Columns>
        <Sidebar>
          <Prices items={materials} />
          <AddMaterial>+ Material</AddMaterial>
          <ListHead><ListTitle>TRATAMENTOS</ListTitle>toque p/ editar</ListHead>
          <Prices items={treatments} />
        </Sidebar>
        <ScrollBar tone="dim" before={642} thumb={236} after={0} openEnd />
        <Main>
          <Card><CardField /></Card>
          <ImportCard><DropZone /><CardField $tall /></ImportCard>
          <CostCard>
            <CostHead>
              <span /><span />
              <span>TEMPO / CUSTO<br />(MIN)</span>
              <span>CUSTO</span>
            </CostHead>
            <CostRow>
              <DimInput placeholder="ex: Tornear externo Ø50" aria-label="Operação" />
              <DimSelect aria-label="Equipamento"><option>Equipamento</option></DimSelect>
              <DimInput $mono placeholder="min" aria-label="Minutos" />
              <CostValue>R$ 0,00</CostValue>
              <RemoveButton aria-label="Remover">✖</RemoveButton>
            </CostRow>
          </CostCard>
        </Main>
        <ScrollBar tone="dim" thumb={517} after={361} openEnd />
      </Columns>
    </>
  );
}

function ReviewForm() {
  return (
    <Form>
      <Intro>Revise e corrija os dados extraídos pela IA. Todos os campos são editáveis.</Intro>
      <SectionTitle $first>Identificação</SectionTitle>
      <FieldGrid $cols={2}>
        <Field id="nome" label="Nome da peça" value="Não especificado" ok />
        <Field id="desenho" label="Nº Desenho" value="0041-008-01-005" ok />
        <Field id="material" label="Material" value="Aço SAE 8620" ok />
        <Field id="dimensao" label="Dimensão principal" value="Ø105.0 x 371.0mm" ok />
        <Field id="comprimento" label="Comprimento total (mm)" value="371" />
        <Field id="diametro" label="Diâmetro maior — Ø (mm)" note="— usado no cálculo do tarugo" ok />
        <Field id="peso" label="Peso bruto do tarugo/chapa (kg)" value="16,5" />
      </FieldGrid>
      <Callout>
        <CalloutTitle><ScaleIcon />Cálculo automático do tarugo</CalloutTitle>
        Preencha o <strong>Comprimento total</strong> e o <strong>Diâmetro maior</strong> (ou os Diâmetros Externos) para calcular o peso do tarugo automaticamente.
      </Callout>
      <SectionTitle>Diâmetros (separados por vírgula, em mm)</SectionTitle>
      <FieldGrid $cols={2}>
        <Field id="externos" label="Externos (Ø)" value="Ø105.0, Ø75.0, Ø74.5, Ø74.0, Ø68.7, Ø67" ok />
        <Field id="internos" label="Internos / Furos (Ø)" placeholder="ex: 10, 8" />
      </FieldGrid>
      <SectionTitle>Roscas, furos e rasgos (uma por linha)</SectionTitle>
      <FieldGrid $cols={3}>
        <Note id="roscas" label="Roscas" value={'M12 interna (profundidade 30.0mm)\nM14 interna (profundidade 30.0mm)'} scroll />
        <Note id="furos" label="Furos" value={'4x Ø9.0mm passante com rebaixo Ø14.0mm (PCD Ø88.0mm)\n2x Ø7.0mm passante'} scroll />
        <Note id="rasgos" label="Rasgos / Rebaixos" placeholder="Ex: Rasgo chaveta 10x60x4,5mm" />
      </FieldGrid>
      <SectionTitle>Tolerâncias e acabamento</SectionTitle>
      <FormFooter>
        <TotalRow>
          <span>Total usinagem: <TotalValue>R$ 0,00</TotalValue><Hint $apart>(sem material)</Hint></span>
          <Hint>☑ Verifique todos os 8 campos antes de confirmar (0/8)</Hint>
        </TotalRow>
        <ActionRow>
          <ActionButton type="button">Cancelar</ActionButton>
          <ActionButton type="button" $primary><CheckIcon />Confirmar e gerar orçamento</ActionButton>
        </ActionRow>
      </FormFooter>
    </Form>
  );
}

export default function App() {
  return (
    <Shell>
      <GlobalStyle />
      <ChromeStrip><ChromeTab /></ChromeStrip>
      <WindowRow>
        <Page>
          <Background />
          <Overlay>
            <Dialog role="dialog" aria-label="Confirmar Análise da IA">
              <DialogContent>
                <DialogHeader>
                  <DialogTitle><ClipboardIcon />Confirmar Análise da IA</DialogTitle>
                  <Confidence>IA: 95% confiança<Meter $fill={95} $wide /></Confidence>
                  <Verified>0 de 8 verificados<Meter $fill={0} /></Verified>
                  <CloseButton aria-label="Fechar">
                    <Glyph width="20" height="20" viewBox="0 0 20 20"><path d="M3.500 3.500l13 13M16.500 3.500l-13 13" strokeWidth="1.300" /></Glyph>
                  </CloseButton>
                </DialogHeader>
                <DialogBody>
                  <DocPane>
                    <DocBar>
                      <FileName>0041-008-01-005.pdf</FileName>
                      <ToolButton>−</ToolButton>
                      <Zoom>100%</Zoom>
                      <ToolButton>+</ToolButton>
                      <ToolButton>
                        <Glyph width="12" height="12" viewBox="0 0 12 12"><rect x="1.500" y="1" width="9" height="10" strokeWidth="1.200" /><path d="M5 6h2" strokeWidth="2" /></Glyph>
                        Fit
                      </ToolButton>
                      <ToolButton>
                        <Glyph width="12" height="12" viewBox="0 0 12 12"><path d="M9 2.800A4 4 0 1 0 10 6" strokeWidth="1.500" /><path d="M6 4.500h4.500V1" strokeWidth="1.300" /></Glyph>
                        Girar
                      </ToolButton>
                    </DocBar>
                    <DocumentViewer />
                  </DocPane>
                  <FormPane>
                    <ReviewForm />
                    <ScrollBar tone="light" thumb={394} after={415} />
                  </FormPane>
                </DialogBody>
              </DialogContent>
              <ScrollBar tone="light" thumb={805} after={31} />
            </Dialog>
          </Overlay>
        </Page>
        <ScrollBar tone="window" thumb={916} after={40} narrow />
      </WindowRow>
    </Shell>
  );
}
